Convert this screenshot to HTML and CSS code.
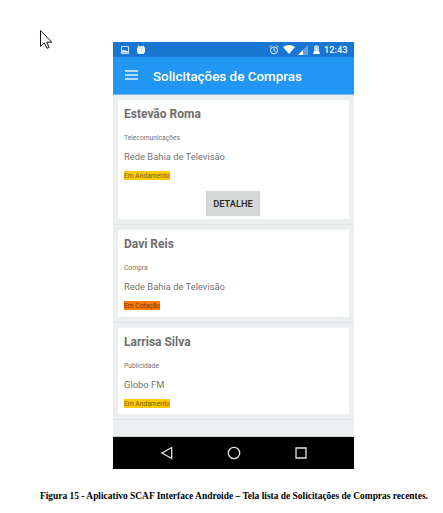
FILE: index.html
```html
<!DOCTYPE html>
<html lang="pt-BR">
<head>
<meta charset="utf-8">
<title>Solicitações de Compras</title>
<link rel="stylesheet" href="styles.css">
</head>
<body>
<svg class="cursor" viewBox="0 0 13 20"><path d="M.5.5v16l3.8-3.600 2.700 5.400 2.100-.9-2.400-5.200h5.100z"/></svg>
<figure class="figure">
  <div class="phone">
    <div class="status">
      <svg class="s-image" viewBox="0 0 8 8"><path d="M.5.5h7v7h-7z" fill="none" stroke="#d4e5f6"/><path d="M1 6.500v-1.600l1.500-1.200 1.300 1 1-.2 2.200 1v1z" fill="#fff"/></svg>
      <svg class="s-droid" viewBox="0 0 8 9"><path d="M1 0l1 1.200h4L7 0v1.500L8 3v4L6.800 9H1.200L0 7V3l1-1.500z" fill="#f1f7fd"/><path d="M2 3h1v1H2zM5 3h1v1H5z" fill="#b5d3f0"/></svg>
      <span class="spacer"></span>
      <svg class="s-alarm" viewBox="0 0 10 10"><circle cx="5" cy="5.400" r="3.500"/><path d="M5 3.200v2.400l1.500.9M.5 2.200L2.500.6M7.500.6l2 1.600"/></svg>
      <svg class="s-wifi" viewBox="0 0 12 9"><path d="M0 2Q6-2 12 2L6 9z" fill="#fff"/></svg>
      <svg class="s-cell" viewBox="0 0 10 10"><path d="M0 10L10 0v10z" fill="#67a4e3"/><path d="M0 10l5-5v5z" fill="#fff"/></svg>
      <svg class="s-battery" viewBox="0 0 7 9"><path d="M2.300 0h2.400v1H6v5H1V1h1.300z" fill="#a9cbef"/><path d="M1 6h5l1 3H0zM4 1.800L2.200 4.300h1.200v1.900L5 3.700H3.800z" fill="#fff"/></svg>
      <span class="clock">12:43</span>
    </div>
    <header class="appbar">
      <svg class="menu" viewBox="0 0 13 10"><path d="M0 1h13M0 5h13M0 9h13"/></svg>
      <h1 class="heading">Solicitações de Compras</h1>
    </header>
    <main class="list">
      <section class="item">
        <article class="card card-open">
          <h2 class="name">Estevão Roma</h2>
          <p class="kind">Telecomunicações</p>
          <p class="company">Rede Bahia de Televisão</p>
          <span class="tag">Em Andamento</span>
          <button class="detail">DETALHE</button>
        </article>
      </section>
      <section class="item">
        <article class="card">
          <h2 class="name">Davi Reis</h2>
          <p class="kind">Compra</p>
          <p class="company">Rede Bahia de Televisão</p>
          <span class="tag tag-quote">Em Cotação</span>
        </article>
      </section>
      <section class="item">
        <article class="card">
          <h2 class="name">Larrisa Silva</h2>
          <p class="kind">Publicidade</p>
          <p class="company">Globo FM</p>
          <span class="tag">Em Andamento</span>
        </article>
      </section>
    </main>
    <nav class="nav">
      <svg viewBox="0 0 14 14"><path d="M11.700 1.500v11L2 7z"/></svg>
      <svg viewBox="0 0 14 14"><circle cx="7" cy="7" r="5.700"/></svg>
      <svg viewBox="0 0 14 14"><path d="M2 2h10v10H2z"/></svg>
    </nav>
  </div>
  <figcaption class="caption">Figura 15 - Aplicativo SCAF Interface Androide – Tela lista de Solicitações de Compras recentes.</figcaption>
</figure>
</body>
</html>
```
FILE: styles.css
```css
* { box-sizing: border-box; }
body {
  margin: 0;
  padding: 30px 0 0 40px;
  width: 443px;
  height: 513px;
  overflow: hidden;
  background: #fff;
  font-family: Roboto, "Liberation Sans", sans-serif;
}
h1, h2, p, figure { margin: 0; }
svg { display: block; flex: none; }
.cursor { width: 13px; height: 20px; fill: #fff; stroke: #15152a; stroke-width: 1; }
.figure { margin-top: -8px; }
.phone {
  display: flex;
  flex-direction: column;
  width: 241px;
  height: 427px;
  margin-left: 73px;
  background: #ebeff0;
}
.status {
  display: flex;
  align-items: center;
  height: 15px;
  padding: 0 5px 0 8px;
  background: #1976d2;
}
.s-image { width: 8px; height: 8px; }
.s-droid { width: 8px; height: 9px; margin-left: 8px; }
.spacer { flex: 1; }
.s-alarm { width: 10px; height: 10px; fill: none; stroke: #e4effa; stroke-width: 1; }
.s-wifi { width: 12px; height: 9px; margin-left: 4px; }
.s-cell { width: 10px; height: 10px; margin-left: 3px; }
.s-battery { width: 7px; height: 9px; margin-left: 5px; }
.clock { width: 25px; margin-left: 4px; color: #f4f9fe; font-size: 9.300px; font-weight: 500; line-height: 15px; white-space: nowrap; }
.appbar {
  display: flex;
  align-items: center;
  height: 38px;
  padding-left: 12px;
  background: #2196f3;
  border-bottom: 1px solid #7fb9ea;
}
.menu { width: 13px; height: 10px; margin-bottom: 1px; stroke: #e9f4fe; stroke-width: 1.400; }
.heading { margin: 2px 0 0 15px; color: #fff; font-size: 13.400px; font-weight: 500; line-height: 16px; white-space: nowrap; }
.list { flex: 1; border-bottom: 1px solid #d2d6d7; }
.item { padding: 5px; border-bottom: 1px solid #dfe4e5; }
.card {
  display: flex;
  flex-direction: column;
  align-items: flex-start;
  height: 86.500px;
  padding: 6px 6px 0;
  background: #fff;
  color: #737373;
  white-space: nowrap;
}
.card-open { height: 119px; }
.name { font-size: 12px; font-weight: 700; line-height: 16px; color: #6e6e6e; }
.kind { margin-top: 11px; font-size: 6.700px; line-height: 10px; }
.company { margin-top: 8px; font-size: 9.400px; line-height: 12px; }
.tag { height: 9px; margin-top: 8px; background: #fdcb05; color: #75600f; font-size: 6.700px; line-height: 10px; }
.tag-quote { background: #f97b0b; color: #74390a; }
.detail {
  align-self: center;
  width: 54px;
  height: 25px;
  margin: 11px 1px 0 0;
  padding: 0;
  border: 0;
  border-radius: 1px;
  background: #d6d8d7;
  box-shadow: 0 0 1px #b8baba;
  color: #252525;
  font: 500 9.300px/25px Roboto, sans-serif;
}
.nav {
  display: flex;
  justify-content: center;
  gap: 53px;
  align-items: center;
  height: 32px;
  background: #000;
}
.nav svg { width: 14px; height: 14px; fill: none; stroke: #e4e4e4; stroke-width: 1.300; }
.caption {
  margin-top: 20px;
  color: #000;
  font: 700 9.430px/14px "Liberation Serif", serif;
  white-space: nowrap;
}
```
